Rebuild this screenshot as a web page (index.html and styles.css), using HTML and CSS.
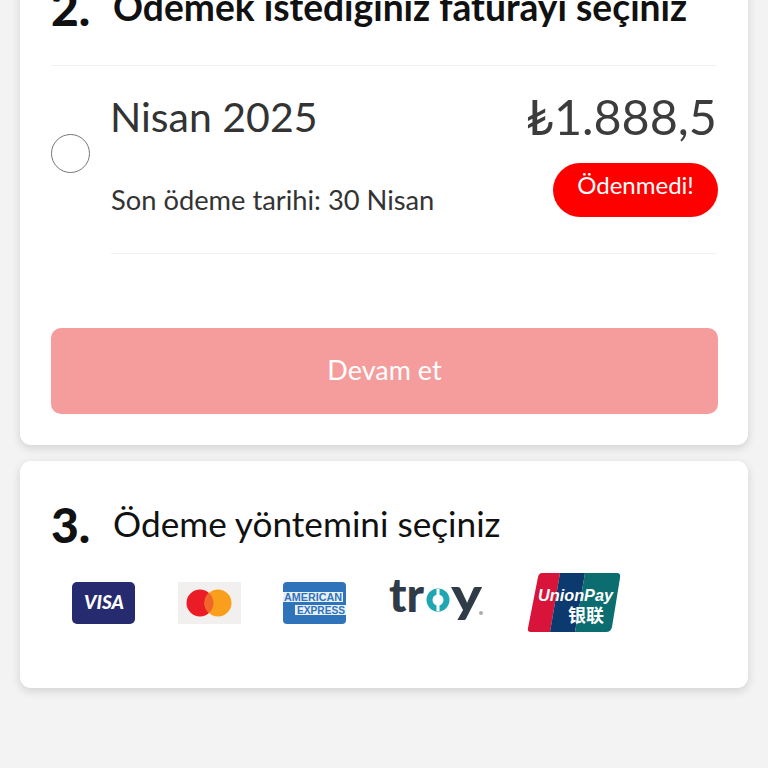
FILE: index.html
```html
<!DOCTYPE html>
<html lang="tr">
<head>
<meta charset="utf-8">
<title>Ödeme</title>
<link rel="stylesheet" href="styles.css">
</head>
<body>
<main class="page">
  <section class="card card-bills">
    <header class="step step-bills">
      <span class="step-no">2.</span>
      <h2 class="step-title step-title-bold">Ödemek istediğiniz faturayı seçiniz</h2>
    </header>
    <div class="bill">
      <span class="radio"></span>
      <div class="bill-body">
        <div class="bill-top">
          <span class="bill-name">Nisan 2025</span>
          <span class="bill-price">₺1.888,5</span>
        </div>
        <div class="bill-bottom">
          <span class="bill-due">Son ödeme tarihi: 30 Nisan</span>
          <span class="badge">Ödenmedi!</span>
        </div>
      </div>
    </div>
    <button class="cta">Devam et</button>
  </section>
  <section class="card card-pay">
    <header class="step">
      <span class="step-no">3.</span>
      <h2 class="step-title">Ödeme yöntemini seçiniz</h2>
    </header>
    <div class="methods">
      <svg width="63" height="42" viewBox="0 0 63 42"><rect width="63" height="42" rx="5" fill="#262a6e"/><text x="32" y="27" text-anchor="middle" class="t-visa">VISA</text></svg>
      <svg width="63" height="42" viewBox="0 0 63 42"><rect width="63" height="42" fill="#f1f0ee"/><circle cx="22" cy="21" r="13.500" fill="#eb1c26"/><circle cx="40" cy="21" r="13.500" fill="#f99f1b"/><path d="M31 11a13.500 13.500 0 0 1 0 20a13.500 13.500 0 0 1 0-20z" fill="#f0652a"/></svg>
      <svg width="63" height="42" viewBox="0 0 63 42"><rect width="63" height="42" rx="4" fill="#2f73bb"/><rect y="10" width="60" height="10" fill="#e9f1f8"/><rect x="12" y="23" width="51" height="10" fill="#e9f1f8"/><text x="1" y="19" textLength="58" lengthAdjust="spacingAndGlyphs" class="t-amex">AMERICAN</text><text x="14" y="32" textLength="48" lengthAdjust="spacingAndGlyphs" class="t-amex">EXPRESS</text></svg>
      <svg width="95" height="46" viewBox="0 0 95 46"><text x="0" y="32" textLength="35" lengthAdjust="spacingAndGlyphs" class="t-troy">tr</text><circle cx="49" cy="20" r="8.500" fill="none" stroke="#1fa6b3" stroke-width="6"/><rect x="47.500" y="9" width="3" height="6" fill="#fff"/><rect x="47.500" y="25" width="3" height="6" fill="#fff"/><text x="62" y="32" textLength="31" lengthAdjust="spacingAndGlyphs" class="t-troy">y</text><circle cx="92" cy="33" r="2" fill="#a9adb0"/></svg>
      <svg width="94" height="60" viewBox="0 0 94 60"><path d="M15 0H33L23 59H4Q0 59 1 55L11 4Q12 0 15 0z" fill="#d8143a"/><path d="M33 0H58L48 59H23z" fill="#0d3a6e"/><path d="M58 0H90Q94 0 93 5L85 54Q84 59 79 59H48z" fill="#0b6d70"/><text x="11" y="28" textLength="75" lengthAdjust="spacingAndGlyphs" class="t-up">UnionPay</text><text x="41" y="49" class="t-upcn">银联</text></svg>
    </div>
  </section>
</main>
</body>
</html>
```
FILE: styles.css
```css
* { box-sizing: border-box; }
html, body { margin: 0; padding: 0; }
body {
  width: 768px;
  height: 768px;
  overflow: hidden;
  background: #f3f3f3;
  font-family: "Lato", "Noto Sans", sans-serif;
  color: #333;
}
.page {
  display: flex;
  flex-direction: column;
  gap: 16px;
  padding: 0 20px;
  margin-top: -60px;
}
.card {
  background: #fff;
  border-radius: 11px;
  box-shadow: 0 3px 10px rgba(0, 0, 0, 0.14);
  padding: 0 30px 0 31px;
}
.card-bills { height: 505px; display: flex; flex-direction: column; }
.card-pay { height: 227px; padding-top: 39px; }
.step { display: flex; align-items: flex-start; gap: 22px; color: #111; }
.step-bills { padding-top: 43px; height: 126px; border-bottom: 1px solid #f0f0f0; margin-right: 2px; }
.step-no { font-size: 48px; font-weight: 900; line-height: 50px; width: 40px; }
.step-title { margin: -2px 0 0; font-size: 35.200px; font-weight: 400; line-height: 50px; white-space: nowrap; }
.step-title-bold { font-size: 37.200px; font-weight: 700; margin-top: -1px; }
.bill { display: flex; align-items: center; gap: 21px; height: 188px; }
.radio { width: 39px; height: 39px; border: 1.500px solid #777; border-radius: 50%; flex: none; margin-top: -14px; }
.bill-body { flex: 1; height: 100%; border-bottom: 1px solid #f0f0f0; margin-right: 2px; padding-top: 22px; }
.bill-top { display: flex; justify-content: space-between; align-items: center; height: 56px; margin-left: -1px; }
.bill-name { font-size: 41px; }
.bill-price { font-size: 48.500px; color: #3c3c3c; margin-right: -1px; }
.bill-bottom { display: flex; justify-content: space-between; align-items: center; margin-top: 19px; margin-right: -2px; }
.bill-due { font-size: 27.300px; padding-top: 18px; }
.badge { background: #f00; color: #fff; font-size: 24px; height: 54px; width: 165px; border-radius: 27px; display: flex; align-items: center; justify-content: center; padding-bottom: 11px; }
.cta {
  margin-top: 74px;
  height: 86px;
  border: 0;
  border-radius: 10px;
  background: #f59d9d;
  color: #fff;
  font: 400 27px "Lato", sans-serif;
  padding-bottom: 4px;
}
.methods { display: flex; align-items: center; margin-top: 23px; padding-left: 21px; gap: 42.700px; }
.t-visa { font: italic 900 19px "Lato", sans-serif; fill: #fff; }
.t-amex { font: 700 11px "Liberation Sans", sans-serif; fill: #2f73bb; }
.t-troy { font: 900 48px "Lato", sans-serif; fill: #2f3b47; }
.t-up { font: italic 700 17px "Liberation Sans", sans-serif; fill: #fff; }
.t-upcn { font: 700 18px "Noto Sans CJK SC", sans-serif; fill: #fff; }
```
